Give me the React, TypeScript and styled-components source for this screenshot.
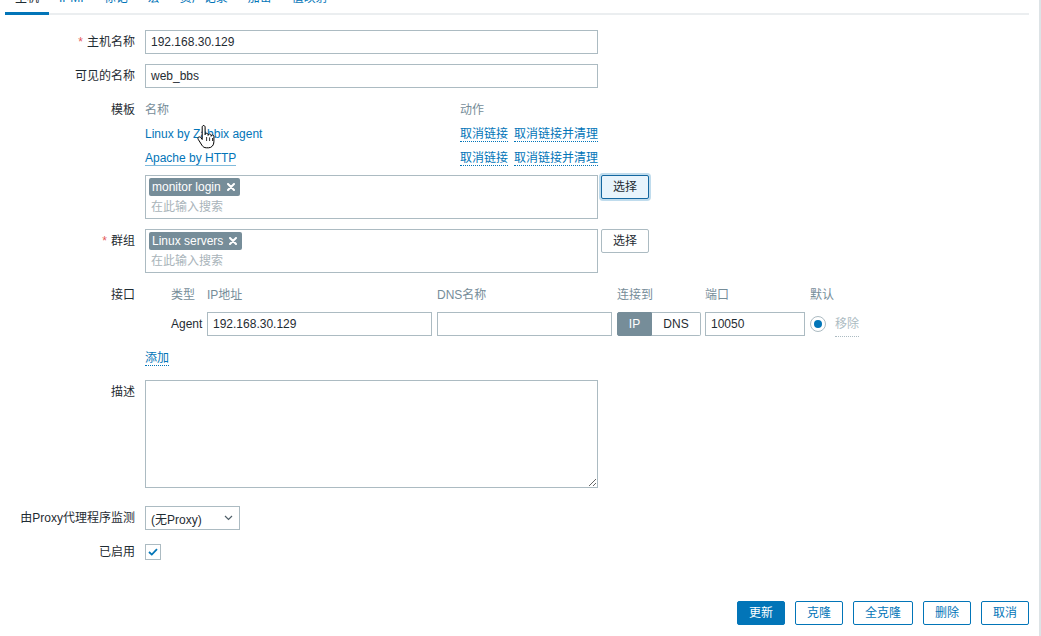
import React from 'react';
import styled, { createGlobalStyle, css } from 'styled-components';

const GlobalStyle = createGlobalStyle`
  html, body {
    margin: 0;
    padding: 0;
    background: #ffffff;
  }
  body {
    font-family: "Liberation Sans", Arial, "Noto Sans CJK SC", sans-serif;
    font-size: 12px;
    color: #1f2c33;
    overflow: hidden;
  }
`;

const Frame = styled.div`
  position: relative;
  width: 1041px;
  height: 636px;
  box-sizing: border-box;
  border-right: 2px solid #dde3e6;
  overflow: hidden;
`;

const Content = styled.div`
  width: 1024px;
  margin-left: 5px;
`;

const TabBar = styled.div`
  display: flex;
  margin-top: -10px;
  border-bottom: 2px solid #ebeef0;
`;

const Tab = styled.div<{ $active?: boolean }>`
  padding: 0 10px 6px;
  line-height: 16px;
  margin-bottom: -2px;
  border-bottom: 3px solid ${(p) => (p.$active ? '#0275b8' : 'transparent')};
  color: ${(p) => (p.$active ? '#1f2c33' : '#0275b8')};
  white-space: nowrap;
`;

const Form = styled.div`
  margin-top: 15px;
`;

const FormRow = styled.div<{ $gap?: number }>`
  display: grid;
  grid-template-columns: 130px 1fr;
  column-gap: 10px;
  margin-bottom: ${(p) => (p.$gap ?? 10)}px;
`;

const Label = styled.div`
  text-align: right;
  line-height: 24px;
  white-space: nowrap;
`;

const Required = styled.span`
  color: #e45959;
  margin-right: 4px;
`;

const Field = styled.div`
  min-width: 0;
  position: relative;
`;

const TextInput = styled.div<{ $width?: number }>`
  width: ${(p) => p.$width ?? 453}px;
  height: 24px;
  box-sizing: border-box;
  border: 1px solid #acbbc2;
  padding: 0 5px;
  line-height: 22px;
  background: #fff;
  white-space: nowrap;
  overflow: hidden;
`;

const TemplateTable = styled.div`
  width: 453px;
  display: grid;
  grid-template-columns: 315px 1fr;
  grid-auto-rows: 24px;
  line-height: 24px;
  margin-bottom: 5px;
`;

const HeaderCell = styled.div`
  color: #768d99;
  white-space: nowrap;
`;

const Cell = styled.div`
  white-space: nowrap;
`;

const Link = styled.span<{ $hovered?: boolean }>`
  color: #0275b8;
  ${(p) =>
    !p.$hovered &&
    css`
      border-bottom: 1px solid rgba(2, 117, 184, 0.5);
    `}
`;

const ActionLink = styled.span<{ $muted?: boolean }>`
  color: ${(p) => (p.$muted ? '#acbbc2' : '#0275b8')};
  border-bottom: 1px dotted ${(p) => (p.$muted ? '#acbbc2' : '#0275b8')};
  margin-right: 6px;
`;

const SelectLine = styled.div`
  display: flex;
  align-items: flex-start;
  gap: 3px;
`;

const MultiSelect = styled.div`
  width: 453px;
  height: 44px;
  box-sizing: border-box;
  border: 1px solid #acbbc2;
  padding: 2px 3px;
`;

const TagChip = styled.span`
  display: inline-flex;
  align-items: center;
  gap: 6px;
  height: 18px;
  padding: 0 5px 0 3px;
  background: #768d99;
  color: #ffffff;
  border-radius: 2px;
  white-space: nowrap;
`;

const Placeholder = styled.div`
  margin-top: 2px;
  padding-left: 2px;
  line-height: 18px;
  color: #a9b4ba;
`;

const Button = styled.button<{ $variant?: 'primary' | 'outline' | 'plain' | 'focused' }>`
  height: 24px;
  padding: 0 11px;
  box-sizing: border-box;
  font-family: inherit;
  font-size: 12px;
  line-height: 22px;
  border-radius: 2px;
  cursor: pointer;
  white-space: nowrap;
  ${(p) => {
    switch (p.$variant) {
      case 'primary':
        return css`
          background: #0275b8;
          border: 1px solid #0275b8;
          color: #ffffff;
        `;
      case 'outline':
        return css`
          background: #ffffff;
          border: 1px solid #0275b8;
          color: #0275b8;
        `;
      case 'focused':
        return css`
          background: #e8f4fc;
          border: 1px solid #1467a0;
          color: #1f2c33;
          box-shadow: 0 0 0 2px rgba(2, 117, 184, 0.25);
        `;
      default:
        return css`
          background: #ffffff;
          border: 1px solid #acbbc2;
          color: #1f2c33;
        `;
    }
  }}
`;

const InterfaceGrid = styled.div`
  display: grid;
  grid-template-columns: 26px 36px 230px 180px 88px 105px auto;
  grid-template-rows: 24px 24px;
  row-gap: 5px;
  line-height: 24px;
`;

const InterfaceType = styled.div`
  line-height: 24px;
`;

const Toggle = styled.div`
  display: flex;
  width: 84px;
  height: 24px;
`;

const ToggleOption = styled.div<{ $on?: boolean }>`
  flex: ${(p) => (p.$on ? '0 0 35px' : '1')};
  box-sizing: border-box;
  text-align: center;
  line-height: 22px;
  border: 1px solid ${(p) => (p.$on ? '#768d99' : '#acbbc2')};
  background: ${(p) => (p.$on ? '#768d99' : '#ffffff')};
  color: ${(p) => (p.$on ? '#ffffff' : '#1f2c33')};
  border-radius: ${(p) => (p.$on ? '2px 0 0 2px' : '0 2px 2px 0')};
  ${(p) => !p.$on && 'border-left: none;'}
`;

const DefaultCell = styled.div`
  display: flex;
  align-items: center;
  gap: 9px;
  height: 24px;
`;

const Radio = styled.span`
  width: 16px;
  height: 16px;
  box-sizing: border-box;
  border: 1px solid #acbbc2;
  border-radius: 50%;
  display: flex;
  align-items: center;
  justify-content: center;

  &::after {
    content: '';
    width: 8px;
    height: 8px;
    border-radius: 50%;
    background: #0275b8;
  }
`;

const AddRow = styled.div`
  margin-top: 10px;
  line-height: 24px;
`;

const TextArea = styled.textarea`
  display: block;
  width: 453px;
  height: 108px;
  box-sizing: border-box;
  border: 1px solid #acbbc2;
  border-radius: 0;
  padding: 4px 5px;
  font-family: inherit;
  font-size: 12px;
  resize: both;
  outline: none;
`;

const FakeSelect = styled.div`
  width: 95px;
  height: 24px;
  box-sizing: border-box;
  border: 1px solid #acbbc2;
  padding: 0 6px 0 5px;
  display: flex;
  align-items: center;
  justify-content: space-between;
  white-space: nowrap;
`;

const CheckLine = styled.div`
  height: 24px;
  display: flex;
  align-items: center;
`;

const CheckBox = styled.span`
  width: 16px;
  height: 16px;
  box-sizing: border-box;
  border: 1px solid #acbbc2;
  display: flex;
  align-items: center;
  justify-content: center;
`;

const ButtonBar = styled.div`
  display: flex;
  justify-content: flex-end;
  gap: 10px;
  margin-top: 37px;
`;

const Cursor = styled.svg`
  position: absolute;
  left: 197px;
  top: 124px;
  pointer-events: none;
`;

const RemoveIcon = () => (
  <svg width="8" height="8" viewBox="0 0 8 8">
    <path d="M1 1 L7 7 M7 1 L1 7" stroke="#ffffff" strokeWidth="2" strokeLinecap="round" />
  </svg>
);

const Chevron = () => (
  <svg width="9" height="6" viewBox="0 0 9 6">
    <path d="M1 1 L4.5 4.5 L8 1" stroke="#4f5f68" strokeWidth="1.2" fill="none" />
  </svg>
);

const CheckMark = () => (
  <svg width="10" height="8" viewBox="0 0 10 8">
    <path d="M1 4 L3.8 6.6 L9 1.2" stroke="#0275b8" strokeWidth="1.8" fill="none" />
  </svg>
);

const HandCursor = () => (
  <Cursor width="20" height="27" viewBox="0 0 20 27">
    <path
      d="M6.5 1.5 c0.9 0 1.6 0.7 1.6 1.6 v7.6 c0-0.8 0.7-1.4 1.5-1.4 s1.5 0.6 1.5 1.4 v0.7 c0-0.8 0.7-1.4 1.5-1.4 s1.5 0.6 1.5 1.4 v0.9 c0-0.8 0.7-1.3 1.4-1.3 s1.4 0.6 1.4 1.4 v5.4 c0 3.3-2.2 6-5.3 6 h-2.2 c-2.1 0-3.5-1-4.5-2.6 l-3.7-5.900 c-0.5-0.8-0.3-1.8 0.4-2.2 s1.7-0.2 2.2 0.5 l1.4 1.9 V3.1 c0-0.9 0.7-1.6 1.6-1.6 z"
      fill="#ffffff"
      stroke="#000000"
      strokeWidth="1"
      strokeLinejoin="round"
    />
    <path d="M9.6 13 v4 M12.6 13.4 v3.6 M15.5 14 v3" stroke="#000000" strokeWidth="0.8" />
  </Cursor>
);

const tabs = ['主机', 'IPMI', '标记', '宏', '资产记录', '加密', '值映射'];

const templates = [
  { name: 'Linux by Zabbix agent', hovered: true },
  { name: 'Apache by HTTP', hovered: false },
];

const footerButtons: { text: string; variant: 'primary' | 'outline' }[] = [
  { text: '更新', variant: 'primary' },
  { text: '克隆', variant: 'outline' },
  { text: '全克隆', variant: 'outline' },
  { text: '删除', variant: 'outline' },
  { text: '取消', variant: 'outline' },
];

const App: React.FC = () => {
  return (
    <>
      <GlobalStyle />
      <Frame>
        <Content>
          <TabBar>
            {tabs.map((t, i) => (
              <Tab key={t} $active={i === 0}>
                {t}
              </Tab>
            ))}
          </TabBar>

          <Form>
            <FormRow>
              <Label>
                <Required>*</Required>主机名称
              </Label>
              <Field>
                <TextInput>192.168.30.129</TextInput>
              </Field>
            </FormRow>

            <FormRow>
              <Label>可见的名称</Label>
              <Field>
                <TextInput>web_bbs</TextInput>
              </Field>
            </FormRow>

            <FormRow>
              <Label>模板</Label>
              <Field>
                <TemplateTable>
                  <HeaderCell>名称</HeaderCell>
                  <HeaderCell>动作</HeaderCell>
                  {templates.map((tpl) => (
                    <React.Fragment key={tpl.name}>
                      <Cell>
                        <Link $hovered={tpl.hovered}>{tpl.name}</Link>
                      </Cell>
                      <Cell>
                        <ActionLink>取消链接</ActionLink>
                        <ActionLink>取消链接并清理</ActionLink>
                      </Cell>
                    </React.Fragment>
                  ))}
                </TemplateTable>
                <SelectLine>
                  <MultiSelect>
                    <TagChip>
                      monitor login
                      <RemoveIcon />
                    </TagChip>
                    <Placeholder>在此输入搜索</Placeholder>
                  </MultiSelect>
                  <Button $variant="focused">选择</Button>
                </SelectLine>
              </Field>
            </FormRow>

            <FormRow>
              <Label>
                <Required>*</Required>群组
              </Label>
              <Field>
                <SelectLine>
                  <MultiSelect>
                    <TagChip>
                      Linux servers
                      <RemoveIcon />
                    </TagChip>
                    <Placeholder>在此输入搜索</Placeholder>
                  </MultiSelect>
                  <Button $variant="plain">选择</Button>
                </SelectLine>
              </Field>
            </FormRow>

            <FormRow>
              <Label>接口</Label>
              <Field>
                <InterfaceGrid>
                  <div />
                  <HeaderCell>类型</HeaderCell>
                  <HeaderCell>IP地址</HeaderCell>
                  <HeaderCell>DNS名称</HeaderCell>
                  <HeaderCell>连接到</HeaderCell>
                  <HeaderCell>端口</HeaderCell>
                  <HeaderCell>默认</HeaderCell>

                  <div />
                  <InterfaceType>Agent</InterfaceType>
                  <TextInput $width={225}>192.168.30.129</TextInput>
                  <TextInput $width={175} />
                  <Toggle>
                    <ToggleOption $on>IP</ToggleOption>
                    <ToggleOption>DNS</ToggleOption>
                  </Toggle>
                  <TextInput $width={100}>10050</TextInput>
                  <DefaultCell>
                    <Radio />
                    <ActionLink $muted>移除</ActionLink>
                  </DefaultCell>
                </InterfaceGrid>
                <AddRow>
                  <ActionLink>添加</ActionLink>
                </AddRow>
              </Field>
            </FormRow>

            <FormRow $gap={18}>
              <Label>描述</Label>
              <Field>
                <TextArea defaultValue="" />
              </Field>
            </FormRow>

            <FormRow>
              <Label>由Proxy代理程序监测</Label>
              <Field>
                <FakeSelect>
                  (无Proxy)
                  <Chevron />
                </FakeSelect>
              </Field>
            </FormRow>

            <FormRow>
              <Label>已启用</Label>
              <Field>
                <CheckLine>
                  <CheckBox>
                    <CheckMark />
                  </CheckBox>
                </CheckLine>
              </Field>
            </FormRow>
          </Form>

          <ButtonBar>
            {footerButtons.map((b) => (
              <Button key={b.text} $variant={b.variant}>
                {b.text}
              </Button>
            ))}
          </ButtonBar>
        </Content>
        <HandCursor />
      </Frame>
    </>
  );
};

export default App;
